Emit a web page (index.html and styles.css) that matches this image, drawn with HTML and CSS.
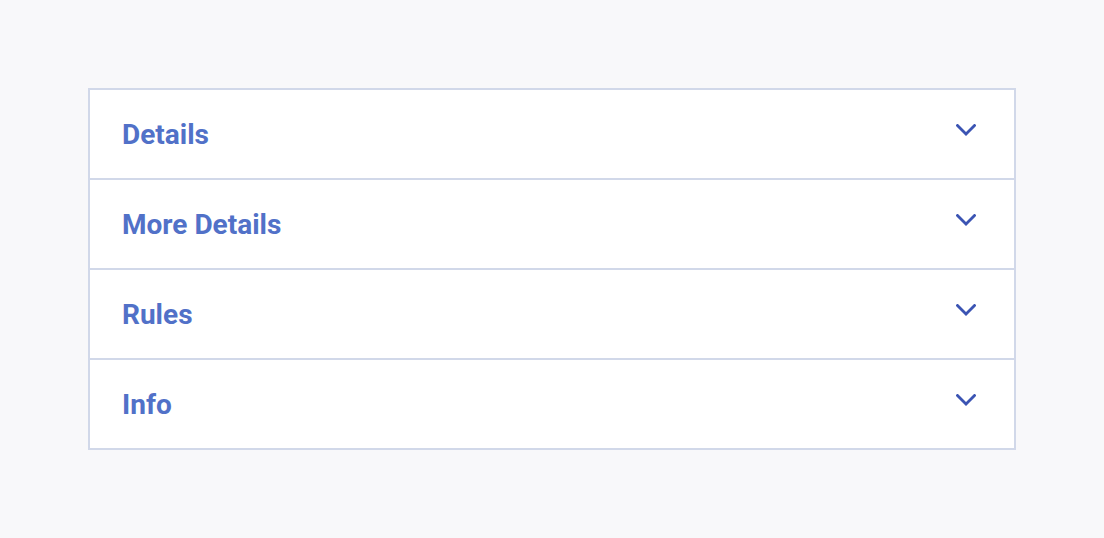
FILE: index.html
```html
<!DOCTYPE html>
<html>
<head>
<meta charset="utf-8">
<link rel="stylesheet" href="styles.css">
</head>
<body>
<div class="accordion">
  <div class="item">
    <span class="title">Details</span>
    <svg class="chev" width="20" height="12" viewBox="0 0 20 12"><polyline points="1.5,1.5 10,10 18.5,1.5"/></svg>
  </div>
  <div class="item">
    <span class="title">More Details</span>
    <svg class="chev" width="20" height="12" viewBox="0 0 20 12"><polyline points="1.5,1.5 10,10 18.5,1.5"/></svg>
  </div>
  <div class="item">
    <span class="title">Rules</span>
    <svg class="chev" width="20" height="12" viewBox="0 0 20 12"><polyline points="1.5,1.5 10,10 18.5,1.5"/></svg>
  </div>
  <div class="item">
    <span class="title">Info</span>
    <svg class="chev" width="20" height="12" viewBox="0 0 20 12"><polyline points="1.5,1.5 10,10 18.5,1.5"/></svg>
  </div>
</div>
</body>
</html>
```
FILE: styles.css
```css
html, body {
  margin: 0;
  padding: 0;
  background: #f8f8fa;
}
body {
  padding: 88px 0 0 88px;
  font-family: Roboto, "Liberation Sans", sans-serif;
}
.accordion {
  width: 928px;
  box-sizing: border-box;
  border: 2px solid #d1d8e9;
  background: #ffffff;
}
.item {
  height: 88px;
  display: flex;
  align-items: center;
  justify-content: space-between;
  padding: 0 38px 0 32px;
  border-bottom: 2px solid #d1d8e9;
}
.item:last-child {
  border-bottom: none;
}
.title {
  font-size: 28px;
  font-weight: 700;
  color: #5171c8;
  line-height: 1;
  margin-top: 2px;
}
.chev {
  margin-bottom: 9px;
  fill: none;
  stroke: #3b54b3;
  stroke-width: 2.8;
  stroke-linecap: square;
}
```
